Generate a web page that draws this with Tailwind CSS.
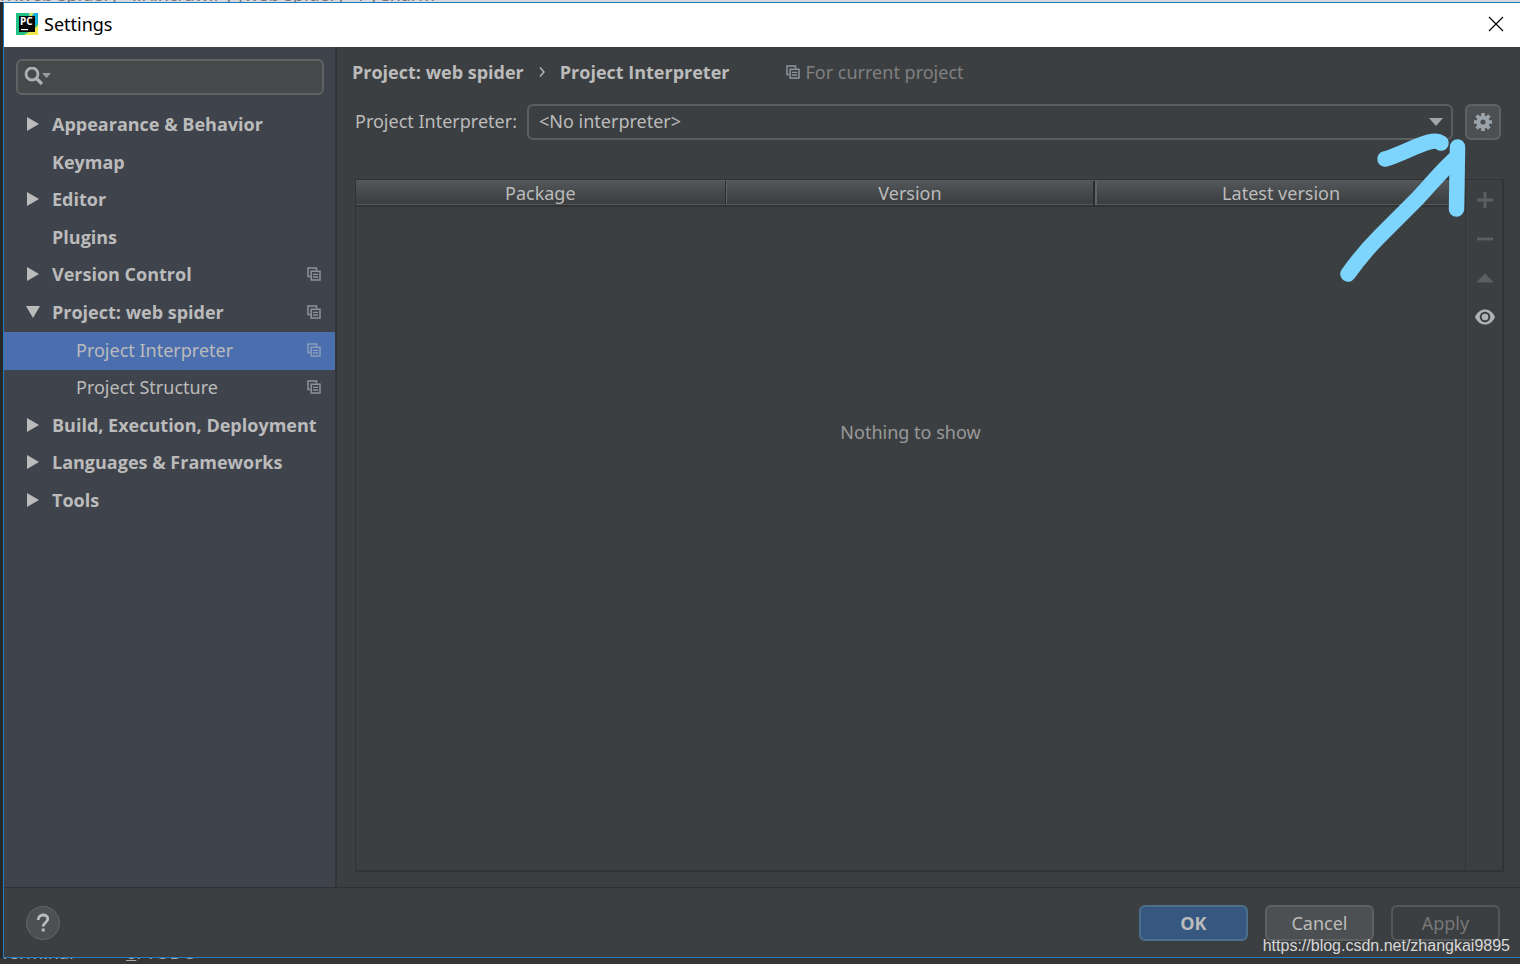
<!DOCTYPE html>
<html lang="en">
<head>
<meta charset="utf-8">
<title>Settings</title>
<script src="https://cdn.jsdelivr.net/npm/@tailwindcss/browser@4"></script>
</head>
<body class="bg-[#2b2b2b]">
<svg class="hidden" aria-hidden="true">
  <symbol id="copy" viewBox="0 0 14 14">
    <path d="M3.500 9.500H1V1H9.500V3.500" fill="none" stroke="currentColor" stroke-width="1.500"/>
    <path d="M4.200 4.200H13V13H4.200Z" fill="none" stroke="currentColor" stroke-width="1.500"/>
    <path d="M6 7.300H11.200M6 10H11.200" stroke="currentColor" stroke-width="1.300"/>
  </symbol>
  <symbol id="right" viewBox="0 0 14 14"><path d="M1 0L13 7L1 14Z" fill="currentColor"/></symbol>
  <symbol id="down" viewBox="0 0 14 14"><path d="M0 1H14L7 13Z" fill="currentColor"/></symbol>
</svg>
<div class="relative flex h-screen flex-col overflow-hidden font-['Noto_Sans',sans-serif] text-lg leading-6 text-[#bbbbbb]">
  <div class="relative h-[2px] shrink-0 overflow-hidden bg-[#d5d9e2] text-[#777777]"><span class="absolute bottom-[-4px] left-0 whitespace-nowrap">n\web spider] - ...\lncrawlPy [web spider] - PyCharm</span></div>

  <div class="flex min-h-0 grow bg-[#25292c] pl-[3px]">
    <div class="flex min-w-0 grow flex-col border-y border-l border-[#2a7ab8] bg-[#3c3f41]">
      <header class="flex h-11 shrink-0 items-center bg-white pr-3 pb-0.5 pl-3 text-black">
        <svg class="size-[22px]" viewBox="0 0 22 22" aria-hidden="true">
          <path d="M0 0H22V22H0Z" fill="#21c285"/>
          <path d="M12 0H22V10L17 15Z" fill="#14b5d8"/>
          <path d="M13 0H18L14 5Z" fill="#d9ea50"/>
          <path d="M22 12V22H8L18 16Z" fill="#eee84c"/>
          <path d="M3 3H19V19H3Z" fill="#080808"/>
          <text x="4" y="12" font-family="Open Sans" font-weight="700" font-size="10" fill="#fff">PC</text>
          <path d="M5 16H12V17.200H5Z" fill="#fff"/>
        </svg>
        <h1 class="ml-1.5 grow">Settings</h1>
        <button aria-label="Close" class="p-1"><svg class="size-4" viewBox="0 0 16 16"><path d="M1 1L15 15M15 1L1 15" stroke="#000" stroke-width="1.200"/></svg></button>
      </header>

      <div class="flex min-h-0 grow border-b border-[#2f3133]">
        <aside class="w-[333px] shrink-0 border-r-2 border-[#323437] bg-[#3f434c] pt-3">
          <label class="mr-[11px] ml-3 flex h-9 items-center rounded-md border-2 border-[#606364] bg-[#45494a] pl-1.5">
            <svg class="h-5 w-7 shrink-0" viewBox="0 0 28 20" aria-hidden="true"><circle cx="8" cy="7" r="6" fill="none" stroke="#adb0b2" stroke-width="2.800"/><path d="M12 11L18 17" stroke="#adb0b2" stroke-width="3.200"/><path d="M18 6H27L22.500 11Z" fill="#9a9da0"/></svg>
            <input type="text" aria-label="Search settings" class="min-w-0 grow bg-transparent outline-none">
          </label>
          <nav class="mt-3 grid h-[413px] auto-rows-fr font-['Open_Sans',sans-serif] font-bold [&>a]:flex [&>a]:items-center [&>a]:pr-3.5 [&>a]:pb-[3px] [&>a]:pl-[22px]">
            <a href="#"><svg class="mr-3 size-3.5"><use href="#right"/></svg>Appearance &amp; Behavior</a>
            <a href="#"><span class="w-[26px]"></span>Keymap</a>
            <a href="#"><svg class="mr-3 size-3.5"><use href="#right"/></svg>Editor</a>
            <a href="#"><span class="w-[26px]"></span>Plugins</a>
            <a href="#"><svg class="mr-3 size-3.5"><use href="#right"/></svg><span class="grow">Version Control</span><svg class="size-3.5 text-[#8b949b]"><use href="#copy"/></svg></a>
            <a href="#"><svg class="mr-3 size-3.5"><use href="#down"/></svg><span class="grow">Project: web spider</span><svg class="size-3.5 text-[#8b949b]"><use href="#copy"/></svg></a>
            <a href="#" aria-current="page" class="bg-[#4b6eaf] font-['Noto_Sans',sans-serif] font-normal"><span class="w-[50px]"></span><span class="grow">Project Interpreter</span><svg class="size-3.5 text-[#8b9dbb]"><use href="#copy"/></svg></a>
            <a href="#" class="font-['Noto_Sans',sans-serif] font-normal"><span class="w-[50px]"></span><span class="grow">Project Structure</span><svg class="size-3.5 text-[#8b949b]"><use href="#copy"/></svg></a>
            <a href="#" class="whitespace-nowrap"><svg class="mr-3 size-3.5 shrink-0"><use href="#right"/></svg>Build, Execution, Deployment</a>
            <a href="#"><svg class="mr-3 size-3.5"><use href="#right"/></svg>Languages &amp; Frameworks</a>
            <a href="#"><svg class="mr-3 size-3.5"><use href="#right"/></svg>Tools</a>
          </nav>
        </aside>

        <main class="flex min-w-0 grow flex-col pt-[13px] pr-4 pb-[15px] pl-[18px]">
          <div class="-ml-[3px] flex items-center">
            <h2 class="flex items-center font-['Open_Sans',sans-serif] font-bold">Project: web spider<svg class="mx-3.5 h-3 w-2" viewBox="0 0 8 12" aria-hidden="true"><path d="M2 1.500L6 6L2 10.500" fill="none" stroke="currentColor" stroke-width="1.400"/></svg>Project Interpreter</h2>
            <svg class="mr-1.5 ml-14 size-3.5 text-[#8b949b]"><use href="#copy"/></svg>
            <span class="text-[#808080]">For current project</span>
          </div>
          <div class="mt-5 flex items-center pr-[3px]">
            <label for="interp" class="mr-2.5 pb-0.5">Project Interpreter:</label>
            <div class="relative min-w-0 grow">
              <select id="interp" class="block h-9 w-full appearance-none rounded-md border-2 border-[#5c5f60] bg-[#3c3f41] pr-8 pb-0.5 pl-2.5 leading-6"><option>&lt;No interpreter&gt;</option></select>
              <svg class="pointer-events-none absolute top-3.5 right-2.5 h-2 w-3.5" viewBox="0 0 14 8" aria-hidden="true"><path d="M0 0H14L7 8Z" fill="#a3a5a7"/></svg>
            </div>
            <button aria-label="Interpreter options" class="ml-3 flex size-9 items-center justify-center rounded-md border-2 border-[#5f6263] bg-[#4c5052]">
              <svg class="size-5" viewBox="0 0 20 20"><path d="M10 1V19M1 10H19M3.600 3.600L16.400 16.400M16.400 3.600L3.600 16.400" stroke="#9aa3aa" stroke-width="3.600"/><circle cx="10" cy="10" r="6.600" fill="#9aa3aa"/><circle cx="10" cy="10" r="2.600" fill="#4c5052"/></svg>
            </button>
            <svg class="pointer-events-none absolute top-[126px] right-[44px] z-10 h-[164px] w-[146px]" viewBox="1330 126 146 164" fill="none" stroke="#7dd5fd" stroke-width="15.500" stroke-linecap="round" stroke-linejoin="round" aria-hidden="true">
              <path d="M1385 159C1399 155 1417 145 1429 142Q1437 140 1441 143"/>
              <path d="M1457.500 147L1456.500 209"/>
              <path d="M1348 274C1358 260 1366 250 1380 236L1418 198C1432 183 1444 168 1457 157"/>
            </svg>
          </div>

          <div class="mt-[39px] flex min-h-0 grow border border-r-2 border-b-2 border-[#313335]">
            <div class="min-w-0 grow">
              <table class="w-full table-fixed border-collapse">
                <thead><tr class="h-[26px] border-b-2 border-[#303234] bg-linear-to-b from-[#54585a] to-[#3b3d3f] [&>th]:p-0 [&>th]:font-normal">
                  <th><div class="border-r border-[#292b2d]">Package</div></th>
                  <th><div class="border-r-2 border-l border-r-[#292b2d] border-l-[#606364]">Version</div></th>
                  <th><div class="border-l-2 border-[#606364]">Latest version</div></th>
                </tr></thead>
              </table>
              <p class="mt-[213px] text-center text-[#999999]">Nothing to show</p>
            </div>
            <div class="flex w-[37px] shrink-0 flex-col items-center gap-[19px] border-l border-[#313335] pt-2.5 pl-0.5">
              <button aria-label="Add"><svg class="size-5" viewBox="0 0 20 20"><path d="M10 2V18M2 10H18" stroke="#5c5e5f" stroke-width="2.800"/></svg></button>
              <button aria-label="Remove"><svg class="size-5" viewBox="0 0 20 20"><path d="M2 10H18" stroke="#5c5e5f" stroke-width="2.800"/></svg></button>
              <button aria-label="Upgrade"><svg class="size-5" viewBox="0 0 20 20"><path d="M1 14.500H19L10 5.500Z" fill="#5c5e5f"/></svg></button>
              <button aria-label="Show early releases"><svg class="size-5" viewBox="0 0 20 20"><path d="M0 10C4 0 16 0 20 10C16 20 4 20 0 10Z" fill="#afb1b3"/><circle cx="10" cy="10" r="4.300" fill="#afb1b3" stroke="#3c3f41" stroke-width="2"/></svg></button>
            </div>
          </div>
        </main>
      </div>

      <footer class="flex h-[69px] shrink-0 items-center gap-[17px] pr-5 pl-[22px]">
        <button aria-label="Help" class="mr-auto flex size-[34px] items-center justify-center rounded-full border border-[#636668] bg-[#4c5052]"><svg class="h-5 w-4" viewBox="0 0 16 20"><path d="M3.200 7C3.200 0.500 12.800 0.500 12.800 6C12.800 9.500 8.200 9.500 8.200 13.500" fill="none" stroke="#bbbbbb" stroke-width="2.800"/><path d="M6.700 15.500H9.700V18.500H6.700Z" fill="#bbbbbb"/></svg></button>
        <button class="h-9 w-[109px] rounded-md border-2 border-[#4c708c] bg-[#365880] font-['Open_Sans',sans-serif] font-bold">OK</button>
        <button class="h-9 w-[109px] rounded-md border-2 border-[#5e6060] bg-[#4c5052]">Cancel</button>
        <button disabled class="h-9 w-[109px] rounded-md border-2 border-[#55585a] text-[#777777]">Apply</button>
      </footer>
    </div>
  </div>

  <div class="relative h-1.5 shrink-0 overflow-hidden bg-[#333537] text-[#aaaaaa]"><span class="absolute bottom-0 left-0">Terminal</span><span class="absolute bottom-0 left-[126px]"><u>6</u>: TODO</span></div>
  <span class="absolute right-2.5 bottom-2 z-20 font-['Liberation_Sans',sans-serif] text-base leading-5 text-[#d8d8d8]">https://blog.csdn.net/zhangkai9895</span>
</div>
</body>
</html>
